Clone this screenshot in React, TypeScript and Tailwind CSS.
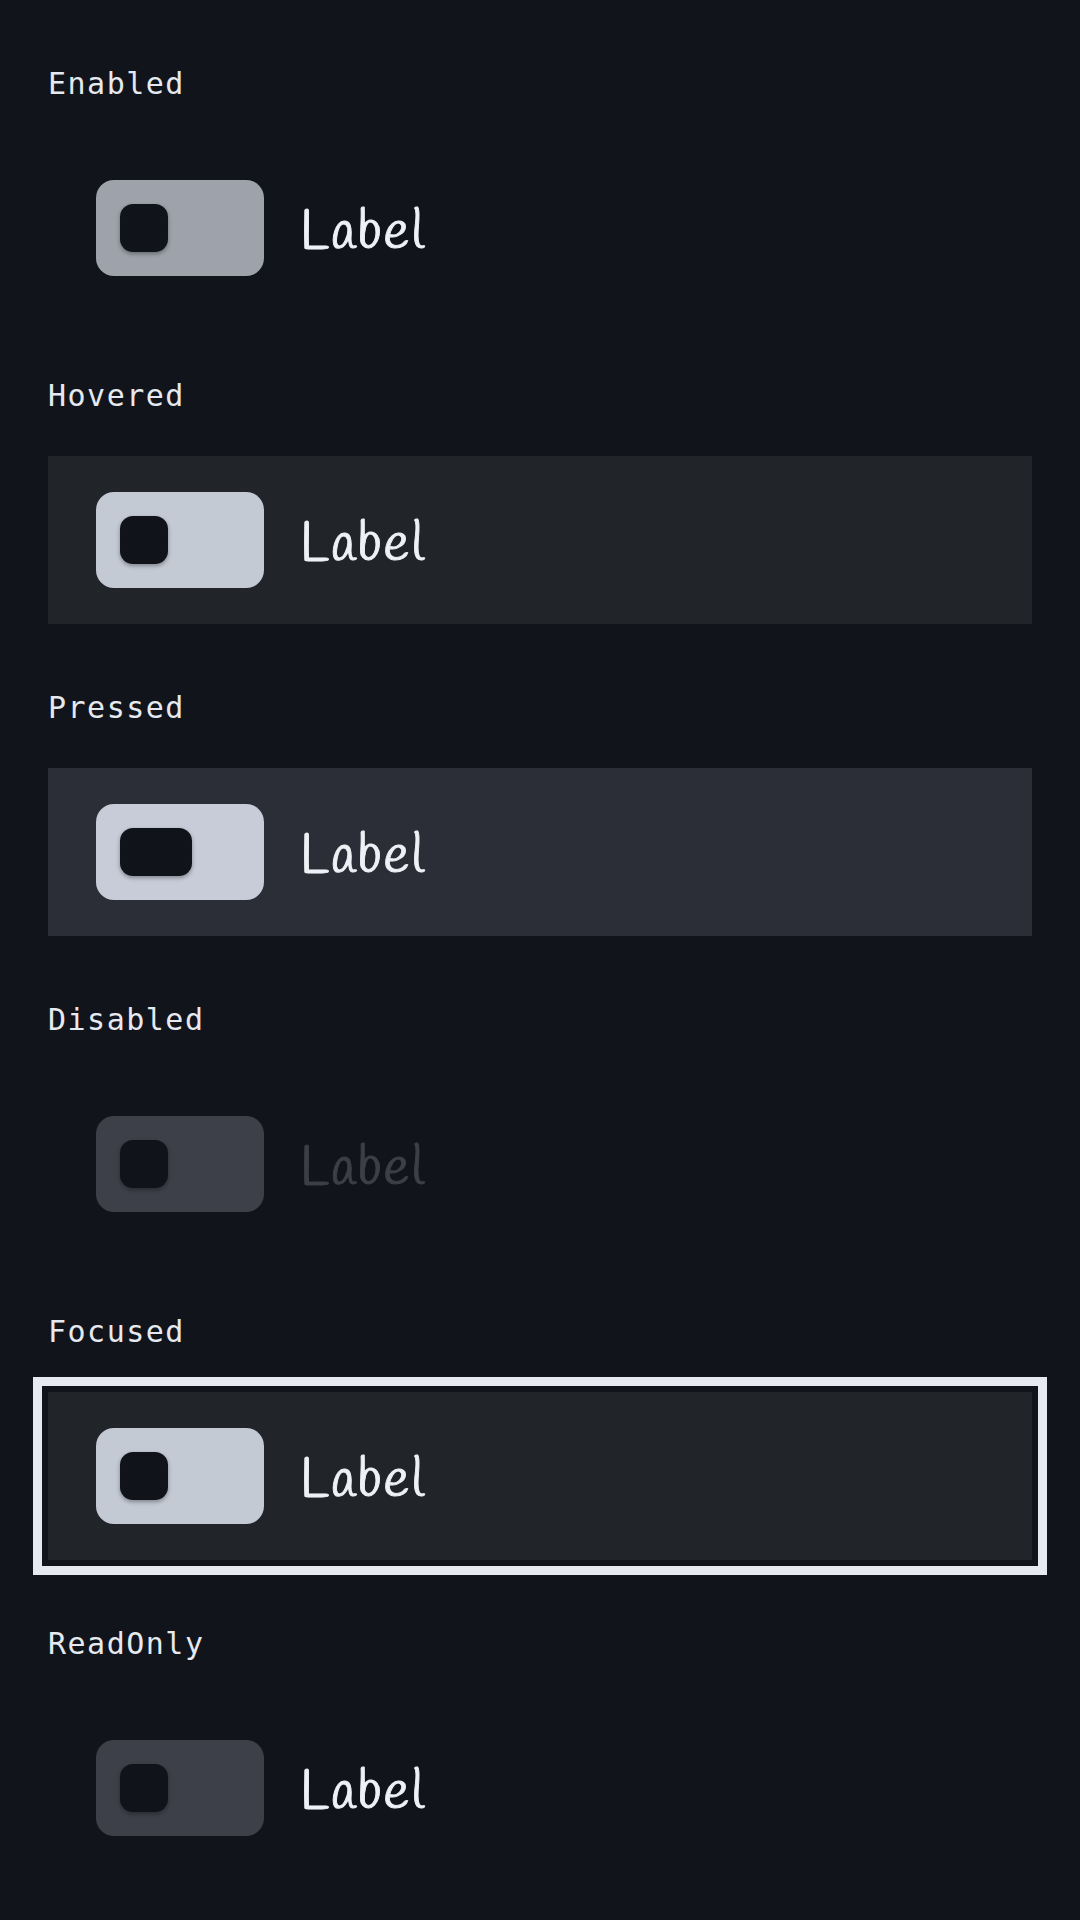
import React from 'react';

type ToggleState = 'enabled' | 'hovered' | 'pressed' | 'disabled' | 'focused' | 'readonly';

interface Variant {
  title: string;
  state: ToggleState;
}

const variants: Variant[] = [
  { title: 'Enabled', state: 'enabled' },
  { title: 'Hovered', state: 'hovered' },
  { title: 'Pressed', state: 'pressed' },
  { title: 'Disabled', state: 'disabled' },
  { title: 'Focused', state: 'focused' },
  { title: 'ReadOnly', state: 'readonly' },
];

// row background per state
const rowClass: Record<ToggleState, string> = {
  enabled: '',
  hovered: 'bg-[#212429]',
  pressed: 'bg-[#2b2e37]',
  disabled: '',
  focused: 'bg-[#212429] shadow-[0_0_0_6px_#11141b,0_0_0_15px_#e6e9ef]',
  readonly: '',
};

const trackClass: Record<ToggleState, string> = {
  enabled: 'bg-[#9ea2aa]',
  hovered: 'bg-[#c4cad4]',
  pressed: 'bg-[#c8ccd8]',
  disabled: 'bg-[#3d4049]',
  focused: 'bg-[#c4cad4]',
  readonly: 'bg-[#3d4049]',
};

const Toggle: React.FC<{ state: ToggleState }> = ({ state }) => {
  const pressed = state === 'pressed';
  return (
    <div className={`flex items-center w-[168px] h-[96px] rounded-[18px] px-6 ${trackClass[state]}`}>
      <div
        className={`h-12 rounded-[13px] bg-[#10131a] shadow-[0_2px_4px_rgba(0,0,0,0.35)] ${
          pressed ? 'w-[72px]' : 'w-12'
        }`}
      />
    </div>
  );
};

const Section: React.FC<Variant> = ({ title, state }) => {
  const disabled = state === 'disabled';
  return (
    <div className="flex flex-col">
      {/* section heading */}
      <div
        className="h-[144px] pt-[66px] text-[30px] leading-[36px] tracking-[0.05em] text-[#e6e9ef]"
        style={{ fontFamily: '"DejaVu Sans Mono", monospace' }}
      >
        {title}
      </div>

      {/* toggle row */}
      <div className={`flex items-center gap-9 h-[168px] px-12 ${rowClass[state]}`}>
        <Toggle state={state} />
        <span
          className={`pt-3 text-[54px] leading-none tracking-[2px] [-webkit-text-stroke:0.9px_currentColor] ${
            disabled ? 'text-[#3c3f48]' : 'text-[#eef1f5]'
          }`}
          style={{ fontFamily: 'Handlee, "Comic Neue", cursive' }}
        >
          Label
        </span>
      </div>
    </div>
  );
};

export default function App() {
  return (
    <div className="min-h-screen bg-[#11141b] px-12">
      {variants.map((v) => (
        <Section key={v.title} {...v} />
      ))}
    </div>
  );
}
